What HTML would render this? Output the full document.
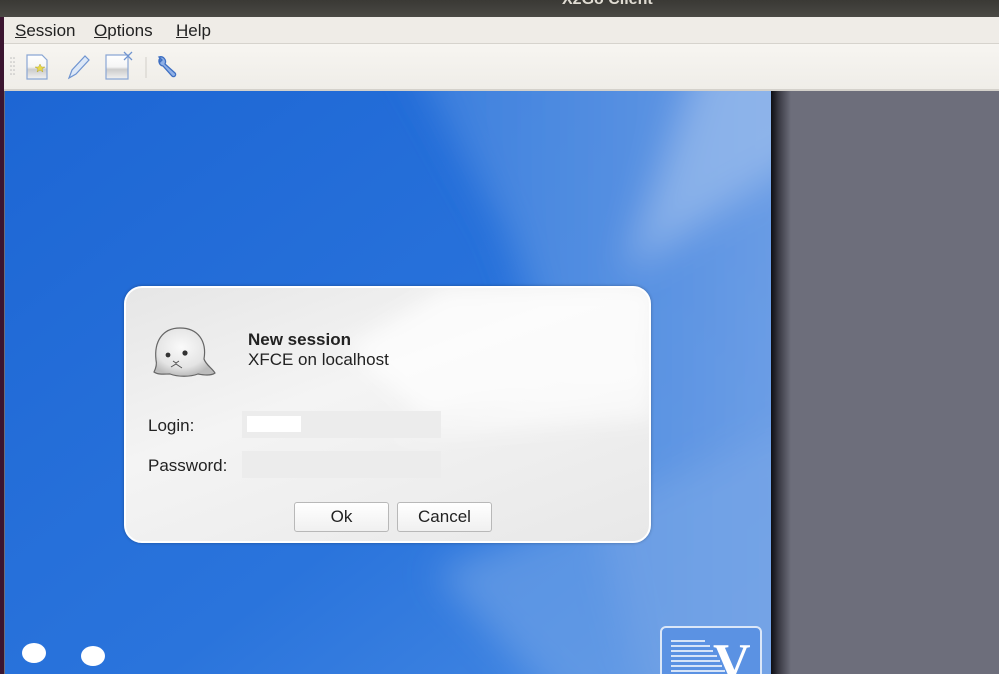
<!DOCTYPE html>
<html><head><meta charset="utf-8"><style>
*{margin:0;padding:0;box-sizing:border-box}
body{width:999px;height:674px;overflow:hidden;position:relative;background:#6d6e7b;font-family:"Liberation Sans","DejaVu Sans",sans-serif}
.title{position:absolute;left:0;top:0;width:999px;height:17px;background:linear-gradient(#3a3935,#4a4944);overflow:hidden}
.title span{position:absolute;left:562px;top:-9px;color:#dfdbd2;font-weight:bold;font-size:16px}
.leftedge{position:absolute;left:0;top:17px;width:4px;height:657px;background:#3b1530}
.menu{position:absolute;left:4px;top:17px;width:995px;height:27px;background:#efece7;border-bottom:1px solid #d6d3cd;font-size:17px;color:#222}
.menu span{position:absolute;top:4px}
.tool{position:absolute;left:4px;top:44px;width:995px;height:47px;background:linear-gradient(#f7f5f1,#efede8);border-bottom:2px solid #d4d1cb}
.blue{position:absolute;left:5px;top:91px;width:766px;height:583px;overflow:hidden}
.shadow{position:absolute;left:771px;top:91px;width:20px;height:583px;background:linear-gradient(90deg,#0d0d12,#3a3a44 40%,#6d6e7b)}
.dlg{position:absolute;left:124px;top:286px;width:527px;height:257px;border:2px solid #fff;border-radius:18px;background:linear-gradient(160deg,#e6e6e6 0%,#f4f4f4 40%,#e8e8e8 100%);overflow:hidden;box-shadow:0 0 3px rgba(0,0,0,.3)}
.t{position:absolute;font-size:17px;color:#222}
.inp{position:absolute;left:116px;width:199px;height:27px;background:#ececec}
.btn{position:absolute;top:214px;width:95px;height:30px;border:1px solid #b8b8b8;border-radius:3px;background:linear-gradient(#fff,#f0f0f0);font-size:17px;text-align:center;line-height:28px;color:#222}
</style></head><body>
<div class="title"><span>X2Go Client</span></div>
<div class="leftedge"></div>
<div class="menu"><span style="left:11px"><u>S</u>ession</span><span style="left:90px"><u>O</u>ptions</span><span style="left:172px"><u>H</u>elp</span></div>
<div class="tool">
<svg width="200" height="45" style="position:absolute;left:0;top:0">
<g fill="#bbb"><circle cx="7" cy="14" r="0.8"/><circle cx="10" cy="14" r="0.8"/><circle cx="7" cy="18" r="0.8"/><circle cx="10" cy="18" r="0.8"/><circle cx="7" cy="22" r="0.8"/><circle cx="10" cy="22" r="0.8"/><circle cx="7" cy="26" r="0.8"/><circle cx="10" cy="26" r="0.8"/><circle cx="7" cy="30" r="0.8"/><circle cx="10" cy="30" r="0.8"/></g>
<defs><linearGradient id="pg" x1="0" y1="0" x2="0" y2="1"><stop offset="0" stop-color="#fff"/><stop offset=".5" stop-color="#f5f5f5"/><stop offset=".6" stop-color="#ccc"/><stop offset="1" stop-color="#f2f2f2"/></linearGradient></defs>
<path d="M23 11h15l5 5v19h-20z" fill="url(#pg)" stroke="#8aa6d4" stroke-width="1.2"/>
<polygon points="36,20 37.5,23 41,23 38,25 39,28 36,26 33,28 34,25 31,23 34.5,23" fill="#e8d84a" stroke="#aa9a20" stroke-width=".4"/>
<path d="M65 34l3-8 13-14 4 4-13 14z" fill="#dde8f7" stroke="#6f94d0" stroke-width="1.2"/>
<path d="M102 11h22v24h-22z" fill="url(#pg)" stroke="#8aa6d4" stroke-width="1.2"/>
<path d="M120 8l8 8M128 8l-8 8" stroke="#6f94d0" stroke-width="1.3"/>
<line x1="142" y1="13" x2="142" y2="34" stroke="#d2cfc9"/>
<path d="M156 14a5 5 0 0 0 3 8l9 10a2 2 0 0 0 3-3l-10-9a5 5 0 0 0-6-7l3 3-2 2z" fill="#8fb0e6" stroke="#3e6fc2" stroke-width="1.3"/>
</svg></div>
<div class="blue">
<svg width="766" height="583" style="display:block">
<defs>
<linearGradient id="bg" x1="0" y1="0" x2="1" y2="1"><stop offset="0" stop-color="#1d66d4"/><stop offset=".6" stop-color="#2a74dc"/><stop offset="1" stop-color="#4a8ce4"/></linearGradient>
<linearGradient id="s1" x1="0" y1="0" x2="1" y2="0"><stop offset="0" stop-color="#3f82de"/><stop offset="1" stop-color="#7ea9e8"/></linearGradient>
<filter id="bl"><feGaussianBlur stdDeviation="18"/></filter>
</defs>
<rect width="766" height="583" fill="url(#bg)"/>
<g filter="url(#bl)">
<polygon points="400,-40 806,-40 806,620 640,620 560,300 500,140" fill="url(#s1)" opacity=".8"/>
<polygon points="700,-40 806,-40 806,60 620,180" fill="#a6c4ef" opacity=".6"/>
<polygon points="430,480 806,330 806,620 560,620" fill="#7aa8e8" opacity=".55"/>
</g>
<ellipse cx="29" cy="562" rx="12" ry="10" fill="#fff"/>
<ellipse cx="88" cy="565" rx="12" ry="10" fill="#fff"/>
<rect x="656" y="536" width="100" height="60" rx="5" fill="#5b92e3" stroke="#dbe7f8" stroke-width="2"/>
<g stroke="#fff" stroke-width="1.5"><line x1="666" y1="550" x2="700" y2="550"/><line x1="666" y1="555" x2="705" y2="555"/><line x1="666" y1="560" x2="708" y2="560"/><line x1="666" y1="565" x2="712" y2="565"/><line x1="666" y1="570" x2="715" y2="570"/><line x1="666" y1="575" x2="717" y2="575"/><line x1="666" y1="580" x2="720" y2="580"/></g>
<text x="708" y="588" font-family="Liberation Serif,serif" font-weight="bold" font-size="52" fill="#fff">V</text>
</svg></div>
<div class="shadow"></div>
<div class="dlg">
<svg width="527" height="257" style="position:absolute;left:0;top:0"><defs><filter id="b2"><feGaussianBlur stdDeviation="10"/></filter></defs><g filter="url(#b2)"><polygon points="320,0 527,0 527,90 300,130 220,60" fill="#fff" opacity=".7"/><polygon points="260,150 527,80 527,130" fill="#fff" opacity=".6"/></g></svg>
<svg width="80" height="80" style="position:absolute;left:22px;top:28px"><defs><radialGradient id="sg" cx=".45" cy=".4" r=".6"><stop offset="0" stop-color="#fafafa"/><stop offset=".7" stop-color="#e4e4e4"/><stop offset="1" stop-color="#bcbcbc"/></radialGradient></defs><path d="M8 44c-2-18 6-32 24-32 18 0 27 13 24 31 2 6 8 9 11 14-4 3-12 2-17 1-8 3-20 3-28 0-5 0-12 1-16-2 2-4 3-8 2-12z" fill="url(#sg)" stroke="#666" stroke-width="1.2"/><circle cx="20" cy="39" r="2.4" fill="#333"/><circle cx="37" cy="37" r="2.6" fill="#333"/><path d="M25 45l3 2 3-2M23 51l5-3 6 4" stroke="#555" fill="none" stroke-width="1"/></svg>
<div class="t" style="left:122px;top:42px;font-weight:bold">New session</div>
<div class="t" style="left:122px;top:62px">XFCE on localhost</div>
<div class="t" style="left:22px;top:128px">Login:</div>
<div class="inp" style="top:123px"><div style="position:absolute;left:5px;top:5px;width:54px;height:16px;background:#fff"></div></div>
<div class="t" style="left:22px;top:168px">Password:</div>
<div class="inp" style="top:163px"></div>
<div class="btn" style="left:168px">Ok</div>
<div class="btn" style="left:271px">Cancel</div>
</div>
</body></html>
